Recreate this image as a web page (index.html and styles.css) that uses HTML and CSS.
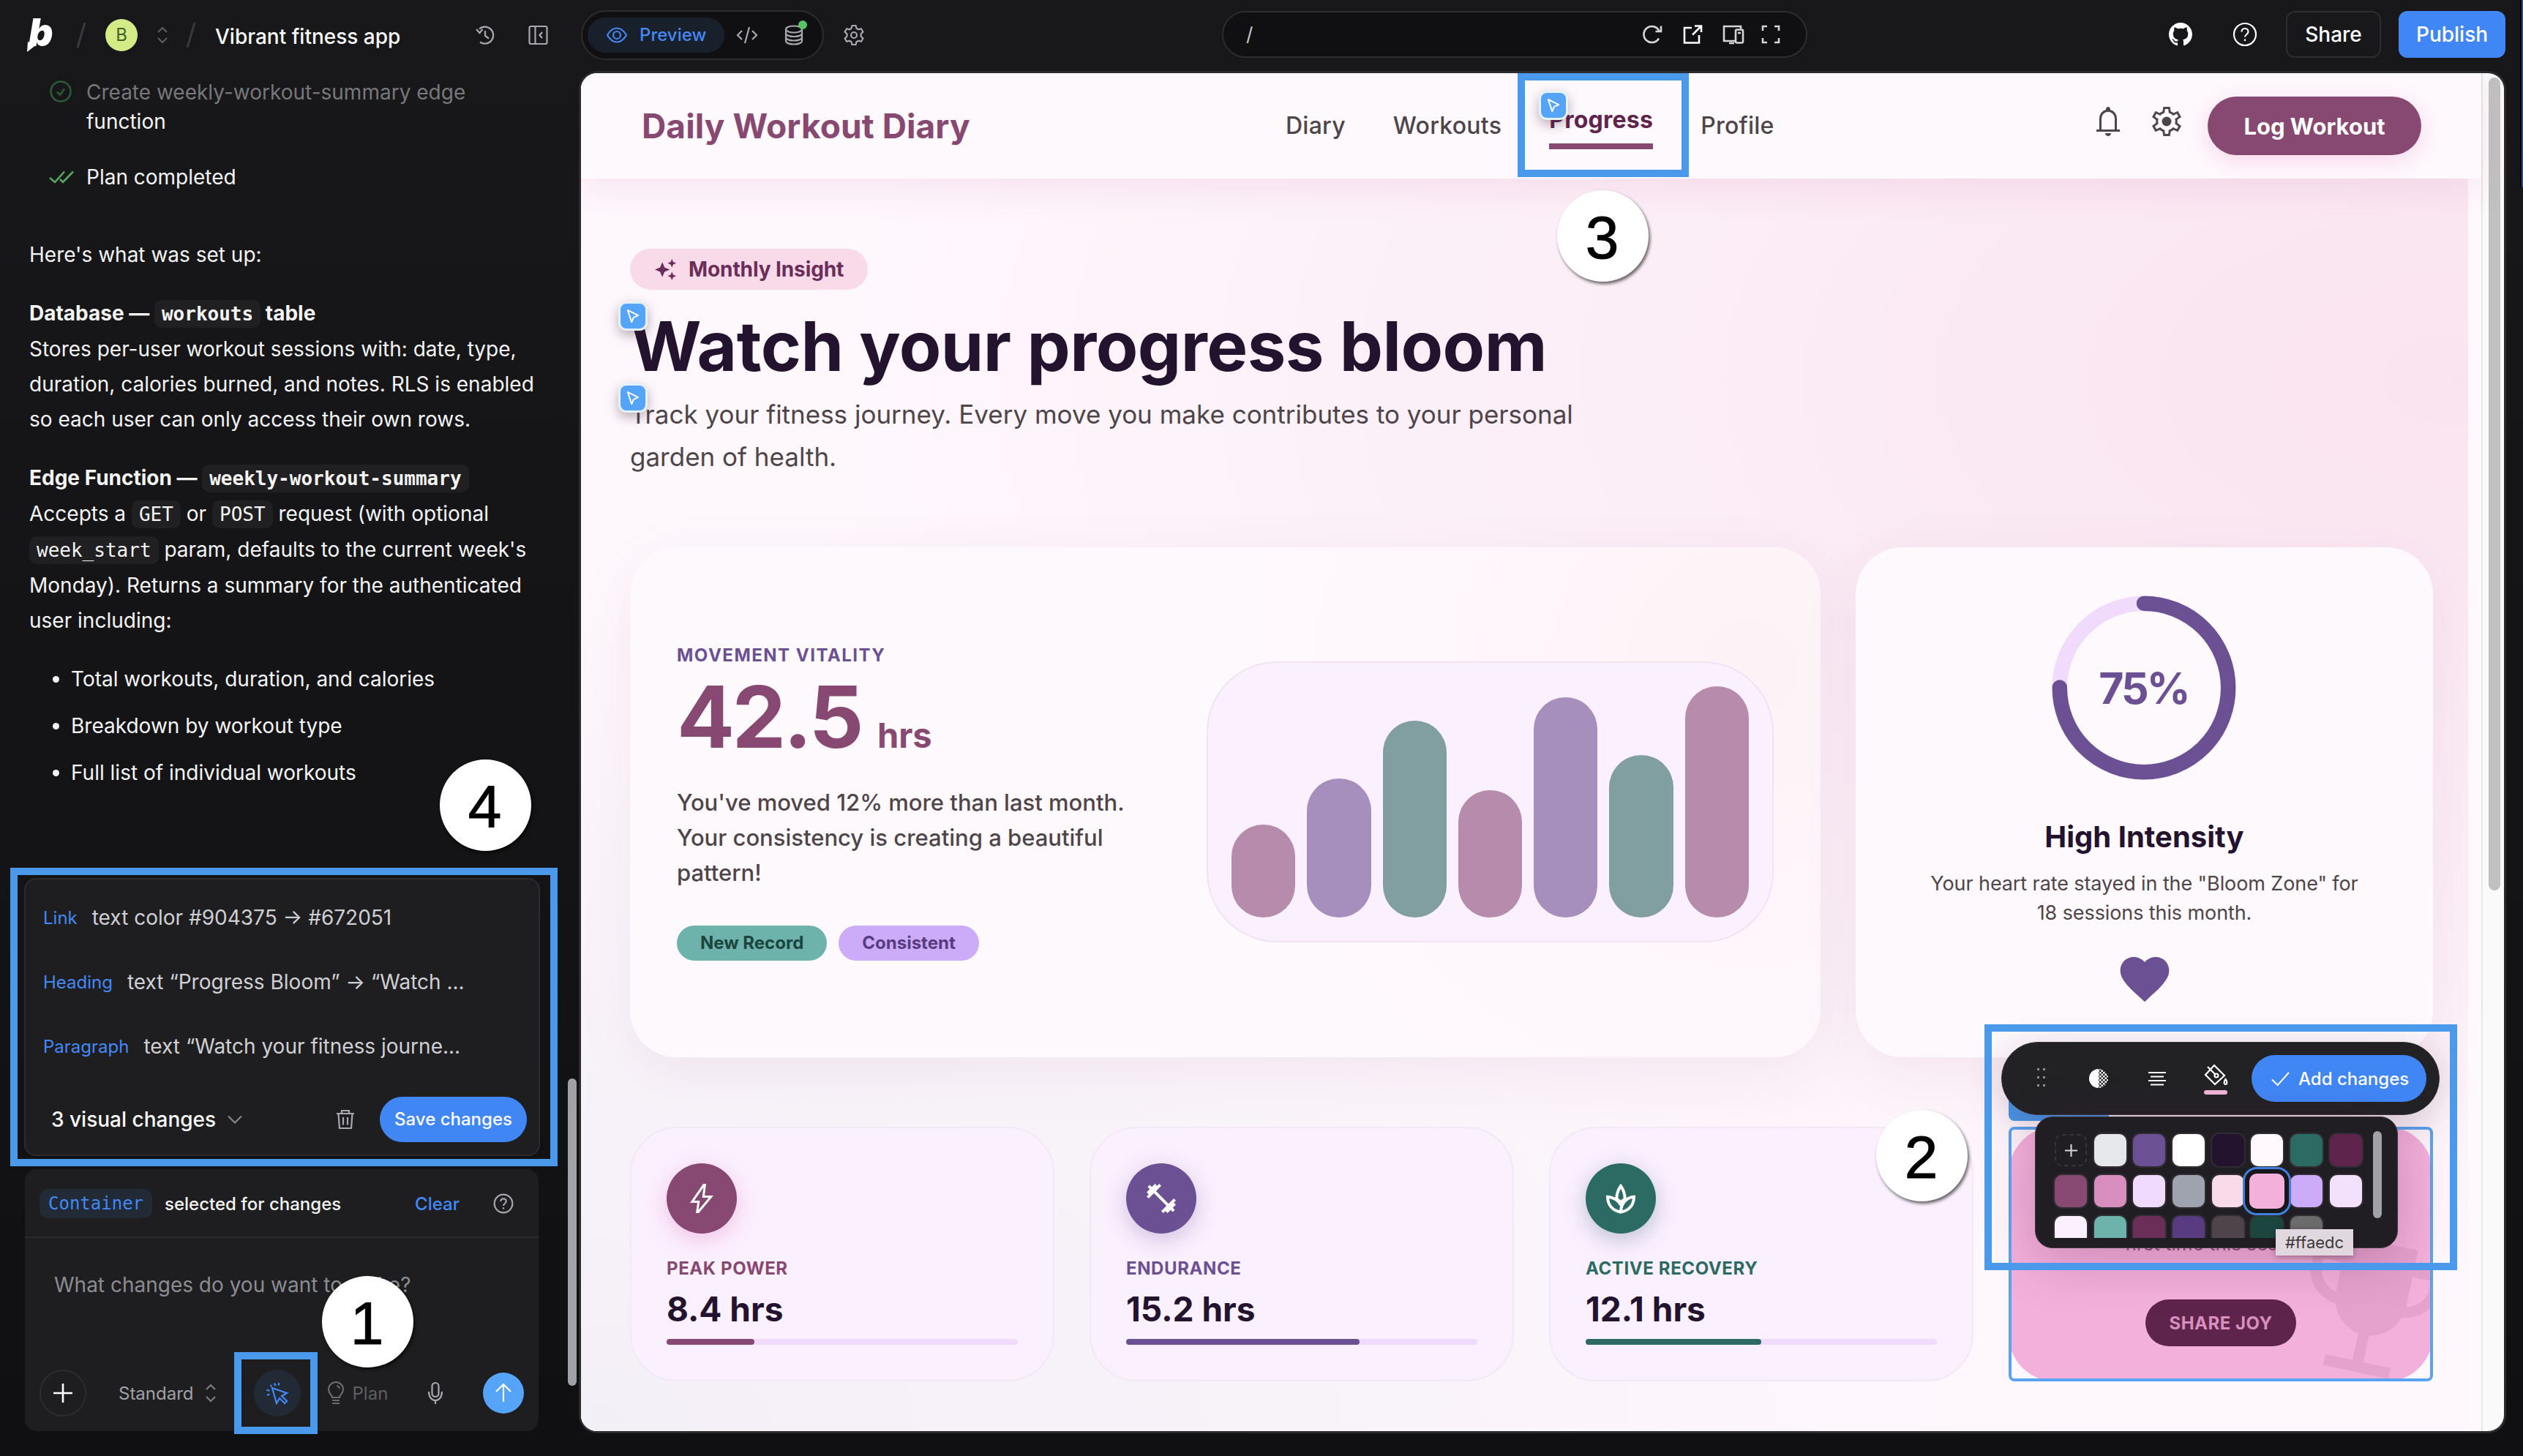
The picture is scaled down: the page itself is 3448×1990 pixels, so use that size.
FILE: index.html
```
<!DOCTYPE html>
<html lang="en">
<head>
  <meta charset="UTF-8">
  <meta name="viewport" content="width=device-width, initial-scale=1.0">
  <title>Vibrant fitness app</title>
  <link rel="stylesheet" href="styles.css">
</head>
<body>
  <header class="topbar">
    <div class="topbar-left">
      <svg class="logo" viewBox="0 0 44 52">
        <text x="4" y="41" class="logo-letter">b</text>
        <polygon points="3,35 15,39 2,49" fill="#fff"/>
      </svg>
      <svg class="slash" viewBox="0 0 14 38"><path d="M12 2L2 36"/></svg>
      <span class="avatar">B</span>
      <svg class="updown" viewBox="0 0 20 30"><path d="M4 11l6-6 6 6M4 19l6 6 6-6"/></svg>
      <svg class="slash slash-second" viewBox="0 0 14 38"><path d="M12 2L2 36"/></svg>
      <span class="project-name">Vibrant fitness app</span>
      <svg class="icon30 history" viewBox="0 0 30 30"><path d="M7 6.500A11.500 11.500 0 1 1 8 24.500M3 7l4.500 5 4-5M15 9v7l5 3.500"/></svg>
      <svg class="icon30 collapse" viewBox="0 0 30 30"><rect x="2.500" y="3" width="24" height="24" rx="2"/><path d="M10.500 3v24M20 11l-3.500 4 3.500 4"/></svg>
    </div>
    <div class="view-switch">
      <span class="preview-tab">
        <svg class="icon30" viewBox="0 0 30 30"><path d="M2 15Q7.500 5.500 15 5.500T28 15Q22.500 24.500 15 24.500T2 15Z"/><circle cx="15" cy="15" r="5"/></svg>
        Preview
      </span>
      <svg class="icon30" viewBox="0 0 30 30"><path d="M8 9l-6 6 6 6M22 9l6 6-6 6M18 4l-6 22"/></svg>
      <span class="database">
        <svg class="icon30" viewBox="0 0 30 30"><ellipse cx="15" cy="7" rx="11" ry="4.500"/><path d="M4 7v16c0 6 22 6 22 0V7M4 12.500c0 6 22 6 22 0M4 18c0 6 22 6 22 0"/></svg>
        <i class="status-dot"></i>
      </span>
    </div>
    <svg class="topbar-gear" viewBox="0 0 32 32"><path d="M13.500 3h5l1 3.800 2.600 1.500 3.800-1.100 2.500 4.300-2.800 2.800v3.400l2.800 2.800-2.500 4.300-3.800-1.100-2.600 1.500-1 3.800h-5l-1-3.800-2.600-1.500-3.800 1.100-2.500-4.300 2.800-2.800v-3.400L3.600 11.500l2.500-4.300 3.800 1.100 2.600-1.500z"/><circle cx="16" cy="16" r="4"/></svg>
    <div class="url-bar">
      <span class="url">/</span>
      <svg class="icon30" viewBox="0 0 30 30"><path d="M24 20.500A11 11 0 1 1 24.500 10.500M27 3.500v7.500h-7.500"/></svg>
      <svg class="icon30 bright" viewBox="0 0 30 30"><path d="M14 6H4v20.500h20V16M18 3.500h9V12M27 3.500L15 15.500"/></svg>
      <svg class="icon30 devices" viewBox="0 0 32 30"><path d="M26 7V4H3v20h15M10 27h7"/><rect x="19" y="8.500" width="10" height="18" rx="2"/><path d="M22 13h4"/></svg>
      <svg class="icon30 fullscreen" viewBox="0 0 30 30"><path d="M4 10V4h6M20 4h6v6M26 20v6h-6M10 26H4v-6"/></svg>
    </div>
    <svg class="github" viewBox="0 0 16 16"><path d="M8 0C3.580 0 0 3.580 0 8c0 3.540 2.290 6.530 5.470 7.590.4.070.55-.17.55-.38 0-.19-.01-.82-.01-1.490-2.010.37-2.530-.49-2.690-.94-.09-.23-.48-.94-.82-1.130-.28-.15-.68-.52-.01-.53.63-.01 1.080.58 1.230.82.72 1.210 1.870.87 2.330.66.07-.52.28-.87.51-1.070-1.780-.2-3.640-.89-3.640-3.950 0-.87.31-1.590.82-2.150-.08-.2-.36-1.020.08-2.120 0 0 .67-.21 2.200.82.64-.18 1.320-.27 2-.27s1.360.09 2 .27c1.530-1.040 2.200-.82 2.200-.82.44 1.100.16 1.920.08 2.120.51.56.82 1.270.82 2.150 0 3.070-1.870 3.750-3.650 3.950.29.25.54.73.54 1.480 0 1.070-.01 1.930-.01 2.200 0 .21.15.46.55.38A8.010 8.010 0 0 0 16 8c0-4.420-3.580-8-8-8z"/></svg>
    <svg class="help" viewBox="0 0 34 34"><circle cx="17" cy="17" r="15"/><path d="M12.500 13.500c0-6 9-6 9 0 0 3.500-4.500 3.500-4.500 7M17 23.500v2.500"/></svg>
    <button class="share">Share</button>
    <button class="publish">Publish</button>
  </header>

  <div class="workspace">
    <aside class="sidebar">
      <div class="messages">
        <div class="step">
          <svg class="step-icon faded" viewBox="0 0 34 34"><circle cx="16" cy="16" r="13.500"/><path d="M11 16.500l4 4 6-8"/></svg>
          <p class="step-text"><span class="dim">Create weekly-workout-summary edge</span> function</p>
        </div>
        <div class="step done">
          <svg class="step-icon" viewBox="0 0 34 34"><path d="M1 18l7 6L21 9.500M15 20l4 4L33 9.500"/></svg>
          <p class="step-text">Plan completed</p>
        </div>
        <p>Here's what was set up:</p>
        <p><strong>Database — <code>workouts</code> table</strong><br>
          Stores per-user workout sessions with: date, type, duration, calories burned, and notes. RLS is enabled so each user can only access their own rows.</p>
        <p><strong>Edge Function — <code>weekly-workout-summary</code></strong><br>
          Accepts a <code>GET</code> or <code>POST</code> request (with optional <code>week_start</code> param, defaults to the current week's Monday). Returns a summary for the authenticated user including:</p>
        <ul>
          <li>Total workouts, duration, and calories</li>
          <li>Breakdown by workout type</li>
          <li>Full list of individual workouts</li>
        </ul>
      </div>

      <section class="changes">
        <div class="change"><span class="kind">Link</span>text color #904375 → #672051</div>
        <div class="change"><span class="kind">Heading</span>text “Progress Bloom” → “Watch ...</div>
        <div class="change"><span class="kind">Paragraph</span>text “Watch your fitness journe...</div>
        <div class="changes-footer">
          <span>3 visual changes</span>
          <svg class="chevron" viewBox="0 0 22 22"><path d="M2 6.500l9 9 9-9"/></svg>
          <svg class="trash" viewBox="0 0 28 30"><path d="M2 7h24M9 7V3h10v4M4.500 7l1.500 20h16l1.500-20M11 12v10.500M17 12v10.500"/></svg>
          <button class="save">Save changes</button>
        </div>
      </section>

      <section class="chat">
        <div class="selected">
          <code class="element-tag">Container</code>
          <span class="selected-label">selected for changes</span>
          <a class="clear">Clear</a>
          <svg class="selected-help" viewBox="0 0 34 34"><circle cx="17" cy="17" r="15"/><path d="M12.500 13.500c0-6 9-6 9 0 0 3.500-4.500 3.500-4.500 7M17 23.500v2.500"/></svg>
        </div>
        <div class="prompt">What changes do you want to make?</div>
        <div class="chat-actions">
          <span class="attach"><svg viewBox="0 0 30 30"><path d="M15 2v26M2 15h26"/></svg></span>
          <span class="mode">Standard</span>
          <svg class="mode-arrows" viewBox="0 0 20 30"><path d="M4 10l6-6 6 6M4 20l6 6 6-6"/></svg>
          <span class="inspect"><svg viewBox="0 0 32 32"><path d="M9 9l20 7-7 4 7 7-3 3-7-7-4 7zM12 2.500l1.500 3.500M18.500 2l-1 3.500M6.500 5l2 2M1.500 11.500l4 1.500M2 19l3.500-1.500"/></svg></span>
          <svg class="bulb" viewBox="0 0 26 32"><path d="M8 22c0-4-5-5-5-11a10 10 0 0 1 20 0c0 6-5 7-5 11zM8 26h10M8 30h10M14 6c2 0 4 2 4 4"/></svg>
          <span class="plan">Plan</span>
          <svg class="mic" viewBox="0 0 24 32"><rect x="7.500" y="2" width="9" height="19" rx="4.500"/><path d="M3 14c0 16 18 16 18 0M12 26v5"/></svg>
          <span class="send"><svg viewBox="0 0 30 30"><path d="M15 27V3M5 13L15 3l10 10"/></svg></span>
        </div>
      </section>
      <i class="sidebar-scroll"></i>
    </aside>

    <div class="preview">
      <div class="page">
        <header class="site-header">
          <div class="brand">Daily Workout Diary</div>
          <nav class="site-nav">
            <a>Diary</a>
            <a>Workouts</a>
            <a class="active">Progress</a>
            <a>Profile</a>
          </nav>
          <svg class="symbol bell" viewBox="0 -960 960 960"><path d="M160-200v-60h80v-304q0-84 49.500-150.500T420-798v-22q0-25 17.500-42.500T480-880q25 0 42.500 17.500T540-820v22q81 17 130.500 83.500T720-564v304h80v60H160ZM480-80q-33 0-56.500-23.500T400-160h160q0 33-23.500 56.500T480-80ZM300-260h360v-304q0-75-52.500-127.500T480-744q-75 0-127.500 52.500T300-564v304Z"/></svg>
          <svg class="symbol cog" viewBox="0 -960 960 960"><path d="m388-80-20-126q-19-7-40-19t-37-25l-118 54-93-164 108-79q-2-9-2.500-20.500T185-480q0-9 .5-20.500T188-521L80-600l93-164 118 54q16-13 37-25t40-18l20-127h184l20 126q19 7 40.500 18.500T669-710l118-54 93 164-108 77q2 10 2.500 21.500t.5 21.500q0 10-.5 21t-2.500 21l108 78-93 164-118-54q-16 13-36.500 25.500T592-206L572-80H388Zm48-60h88l14-112q33-8 62.500-25t53.500-41l106 46 40-72-94-69q4-17 6.500-33.500T715-480q0-17-2-33.500t-7-33.500l94-69-40-72-106 46q-23-26-52-43.500T538-708l-14-112h-88l-14 112q-34 7-63.500 24T306-642l-106-46-40 72 94 69q-4 17-6.500 33.500T245-480q0 17 2.500 33.500T254-413l-94 69 40 72 106-46q24 24 53.500 41t62.500 25l14 112Z"/><circle cx="480" cy="-480" r="130"/></svg>
          <button class="log">Log Workout</button>
        </header>

        <main class="main">
          <span class="badge">
            <svg viewBox="0 0 24 24"><path d="M9 5l2.100 4.900L16 12l-4.900 2.100L9 19l-2.100-4.900L2 12l4.900-2.100zM18 2l1.200 2.800L22 6l-2.800 1.200L18 10l-1.200-2.800L14 6l2.800-1.200zM18 14l1.200 2.800L22 18l-2.800 1.200L18 22l-1.200-2.800L14 18l2.800-1.200z"/></svg>
            Monthly Insight
          </span>
          <h1>Watch your progress bloom</h1>
          <p class="lead">Track your fitness journey. Every move you make contributes to your personal garden of health.</p>

          <div class="highlights">
            <section class="card vitality">
              <div class="vitality-text">
                <h4>Movement Vitality</h4>
                <div class="hours">42.5<span>hrs</span></div>
                <p>You've moved 12% more than last month.<br>Your consistency is creating a beautiful pattern!</p>
                <div class="chips"><span class="chip teal">New Record</span><span class="chip violet">Consistent</span></div>
              </div>
              <div class="chart">
                <i class="rose" style="height: 40%"></i>
                <i class="purple" style="height: 60%"></i>
                <i class="green" style="height: 85%"></i>
                <i class="rose" style="height: 55%"></i>
                <i class="purple" style="height: 95%"></i>
                <i class="green" style="height: 70%"></i>
                <i class="rose" style="height: 100%"></i>
              </div>
            </section>
            <section class="card intensity">
              <div class="ring">
                <svg viewBox="0 0 100 100">
                  <circle cx="50" cy="50" r="45" stroke="#f1dbfd"/>
                  <circle cx="50" cy="50" r="45" stroke="#6c5094" stroke-linecap="round" stroke-dasharray="212.060 282.740" transform="rotate(-90 50 50)"/>
                </svg>
                <span>75%</span>
              </div>
              <h3>High Intensity</h3>
              <p>Your heart rate stayed in the "Bloom Zone" for<br>18 sessions this month.</p>
              <svg class="heart" viewBox="0 0 24 24"><path d="M12 21.350l-1.450-1.320C5.400 15.360 2 12.280 2 8.500 2 5.420 4.420 3 7.500 3c1.740 0 3.410.81 4.500 2.090C13.090 3.810 14.760 3 16.500 3 19.580 3 22 5.420 22 8.500c0 3.780-3.400 6.860-8.550 11.540L12 21.350z"/></svg>
            </section>
          </div>

          <div class="stats">
            <section class="stat power">
              <span class="stat-icon"><svg viewBox="0 -960 960 960"><path d="m393-165 279-335H492l36-286-253 366h154l-36 255Zm-73 85 40-280H160l360-520h80l-40 320h240L400-80h-80Z"/></svg></span>
              <h4>Peak Power</h4>
              <div class="value">8.4 hrs</div>
              <div class="progress"><i style="width: 25%"></i></div>
            </section>
            <section class="stat endurance">
              <span class="stat-icon"><svg viewBox="0 0 24 24"><path d="M20.570 14.860L22 13.430 20.570 12 17 15.570 8.430 7 12 3.430 10.570 2 9.140 3.430 7.710 2 5.570 4.140 4.140 2.710 2.710 4.140l1.430 1.430L2 7.710l1.430 1.430L2 10.570 3.430 12 7 8.430 15.570 17 12 20.570 13.430 22l1.430-1.430L16.290 22l2.140-2.140 1.430 1.430 1.430-1.430-1.430-1.430L22 16.290z"/></svg></span>
              <h4>Endurance</h4>
              <div class="value">15.2 hrs</div>
              <div class="progress"><i style="width: 66.500%"></i></div>
            </section>
            <section class="stat recovery">
              <span class="stat-icon"><svg class="lotus" viewBox="0 0 24 24"><path d="M12 21.200C6.500 20.500 3 16.500 3 10.900c3.800.3 7.200 2.300 9.300 5.800M12 21.200c5.500-.7 9-4.700 9-10.300-3.600.3-8.800 2.800-9 10.300zM9.100 12.200C9.300 8.400 10.300 5.800 12 3.500c1.700 2.300 2.700 4.900 2.900 8.700M9.100 12.200c1.200.8 2.200 1.700 2.900 2.800.7-1.100 1.700-2 2.900-2.800"/></svg></span>
              <h4>Active Recovery</h4>
              <div class="value">12.1 hrs</div>
              <div class="progress"><i style="width: 50%"></i></div>
            </section>
            <section class="stat trophy">
              <svg class="trophy-icon" viewBox="0 -960 960 960"><path d="M298-120v-60h152v-148q-54-11-96-46.500T296-463q-74-8-125-60t-51-125v-44q0-25 17.500-42.500T180-752h104v-88h392v88h104q25 0 42.500 17.500T840-692v44q0 73-51 125t-125 60q-16 53-58 88.500T510-328v148h152v60H298Zm-14-404v-168H180v44q0 45 29.500 78.500T284-524Zm392 0q45-12 74.500-45.500T780-648v-44H676v168Z" fill-rule="evenodd"/></svg>
              <p>first time this season.</p>
              <button class="joy">SHARE JOY</button>
            </section>
          </div>
        </main>
      </div>
      <div class="page-scroll"><i></i></div>
    </div>
  </div>

  <!-- selected element outline and its toolbar -->
  <i class="outline-tag"></i>
  <i class="outline"></i>
  <div class="toolbar">
    <svg class="grip" viewBox="0 0 14 30"><path d="M2 2h3v3h-3zM10 2h3v3h-3zM2 13h3v3h-3zM10 13h3v3h-3zM2 24h3v3h-3zM10 24h3v3h-3z"/></svg>
    <svg class="contrast" viewBox="0 0 28 28">
      <defs><pattern id="checks" width="5" height="5" patternUnits="userSpaceOnUse"><path d="M0 0h2.500v2.500H0zM2.500 2.500h2.500v2.500H2.500z" fill="#fff"/></pattern></defs>
      <path d="M14 1a13 13 0 0 0 0 26z" fill="#fff"/><path d="M14 1a13 13 0 0 1 0 26z" fill="url(#checks)"/>
    </svg>
    <svg class="align" viewBox="0 0 26 20"><path d="M1 2h24M4 7.500h18M1 13h24M4 18.500h18"/></svg>
    <span class="fill">
      <svg viewBox="0 0 34 32"><path d="M14 3l14 14-13 12L2 16zM5 5l11 11M29.500 22c3 4 2 7 0 7s-3-3 0-7z"/><circle cx="17" cy="17" r="2.500"/></svg>
      <i></i>
    </span>
    <button class="add"><svg viewBox="0 0 28 22"><path d="M2 12l8 8L26 2"/></svg>Add changes</button>
  </div>
  <div class="palette">
    <div class="swatches">
      <i class="swatch new"><svg viewBox="0 0 20 20"><path d="M10 1v18M1 10h18"/></svg></i>
      <i class="swatch" style="background: #e5e7eb"></i>
      <i class="swatch" style="background: #6c5094"></i>
      <i class="swatch" style="background: #ffffff"></i>
      <i class="swatch" style="background: #24132e"></i>
      <i class="swatch" style="background: #fff8fc"></i>
      <i class="swatch" style="background: #2c6b63"></i>
      <i class="swatch" style="background: #5f244c"></i>
      <i class="swatch" style="background: #874871"></i>
      <i class="swatch" style="background: #d88fbf"></i>
      <i class="swatch" style="background: #f1dbfd"></i>
      <i class="swatch" style="background: #9fa3af"></i>
      <i class="swatch" style="background: #f8dae9"></i>
      <i class="swatch picked" style="background: #f2b0da"></i>
      <i class="swatch" style="background: #ccabf9"></i>
      <i class="swatch" style="background: #f3e0fb"></i>
      <i class="swatch" style="background: #fbf0fe"></i>
      <i class="swatch" style="background: #6db3ab"></i>
      <i class="swatch" style="background: #6b2e59"></i>
      <i class="swatch" style="background: #583b80"></i>
      <i class="swatch" style="background: #4f444a"></i>
      <i class="swatch" style="background: #1c4540"></i>
      <i class="swatch" style="background: #6b6b6b"></i>
    </div>
    <i class="palette-scroll"></i>
  </div>
  <span class="tooltip">#ffaedc</span>

  <span class="edit-pin pin-nav"><svg viewBox="0 0 20 22"><path d="M2 2l16 8-7 3-3 7z"/></svg></span>
  <span class="edit-pin pin-heading"><svg viewBox="0 0 20 22"><path d="M2 2l16 8-7 3-3 7z"/></svg></span>
  <span class="edit-pin pin-lead"><svg viewBox="0 0 20 22"><path d="M2 2l16 8-7 3-3 7z"/></svg></span>

  <!-- numbered callouts -->
  <i class="frame frame-inspect"></i>
  <i class="frame frame-toolbar"></i>
  <i class="frame frame-nav"></i>
  <i class="frame frame-changes"></i>
  <span class="callout callout-1">1</span>
  <span class="callout callout-2">2</span>
  <span class="callout callout-3">3</span>
  <span class="callout callout-4">4</span>
  <i class="edge"></i>
</body>
</html>
```
FILE: styles.css
```
* {
  box-sizing: border-box;
}

body {
  position: relative;
  margin: 0;
  width: 3448px;
  height: 1990px;
  overflow: hidden;
  background: linear-gradient(#18181a, #101012);
  color: #f4f4f5;
  font-family: Inter, "Liberation Sans", sans-serif;
  font-size: 28px;
}

h1, h3, h4, p, ul {
  margin: 0;
}

i {
  display: block;
}

button {
  border: none;
  padding: 0;
  font-family: inherit;
  color: #fff;
}

svg {
  display: block;
  flex: none;
  fill: none;
  stroke: #a8a8ae;
  stroke-width: 2.2;
}

/* top bar */
.topbar {
  display: flex;
  align-items: center;
  height: 93px;
}

.topbar-left {
  display: flex;
  align-items: center;
  width: 794px;
  padding: 3px 43px 0 35px;
}

.logo {
  width: 44px;
  height: 52px;
  stroke: none;
  overflow: visible;
}

.logo-letter {
  font-size: 52px;
  font-weight: 900;
  font-style: italic;
  fill: #fff;
}

.slash {
  width: 14px;
  height: 38px;
  margin-left: 25px;
  stroke: #3a3a3d;
  stroke-width: 3;
}

.slash-second {
  margin-left: 22px;
}

.avatar {
  width: 44px;
  height: 44px;
  margin-left: 26px;
  border-radius: 50%;
  background: #d3ec87;
  color: #47602a;
  font-size: 24px;
  line-height: 44px;
  text-align: center;
}

.updown {
  width: 20px;
  height: 30px;
  margin-left: 24px;
  stroke: #5c5c60;
}

.project-name {
  margin: 3px auto 0 26px;
  font-weight: 500;
  color: #fafafa;
}

.icon30 {
  width: 30px;
  height: 30px;
}

.collapse {
  margin-left: 43px;
}

.view-switch {
  display: flex;
  align-items: center;
  gap: 34px;
  width: 332px;
  height: 68px;
  margin-top: 2px;
  padding-left: 7px;
  border: 2px solid #2d2d30;
  border-radius: 34px;
  background: #101012;
}

.preview-tab {
  display: flex;
  align-items: center;
  gap: 16px;
  width: 187px;
  height: 48px;
  margin-right: -18px;
  padding-left: 25px;
  border-radius: 24px;
  background: #18202b;
  color: #4488f5;
  font-size: 24px;
  font-weight: 500;
}

.preview-tab svg {
  stroke: #4488f5;
}

.database {
  position: relative;
}

.status-dot {
  position: absolute;
  top: -5px;
  right: -3px;
  width: 12px;
  height: 12px;
  border-radius: 50%;
  background: #57c464;
}

.topbar-gear {
  width: 32px;
  height: 32px;
  margin: 3px 486px 0 25px;
}

.url-bar {
  display: flex;
  align-items: center;
  gap: 25px;
  width: 800px;
  height: 64px;
  margin: 0 494px 0 1px;
  padding: 0 31px;
  border: 2px solid #2d2d30;
  border-radius: 32px;
  background: #101012;
}

.url-bar svg {
  stroke: #d4d4d8;
  stroke-width: 2.6;
}

.url-bar .bright {
  stroke: #fff;
}

.url-bar .devices {
  width: 32px;
}

.url-bar .fullscreen {
  margin: 0 2px 0 -5px;
}

.url {
  margin-right: auto;
  color: #c6c6ca;
  font-size: 26px;
}

.github {
  width: 32px;
  height: 32px;
  fill: #fff;
  stroke: none;
}

.help {
  width: 34px;
  height: 34px;
  margin: 0 39px 0 55px;
  stroke: #fff;
}

.share,
.publish {
  height: 64px;
  border-radius: 12px;
  font-size: 28px;
  font-weight: 500;
}

.share {
  width: 130px;
  margin-right: 24px;
  border: 2px solid #2d2d30;
  background: none;
}

.publish {
  width: 146px;
  background: #4087f5;
}

/* sidebar */
.workspace {
  display: flex;
  height: 1863px;
}

.sidebar {
  position: relative;
  display: flex;
  flex-direction: column;
  width: 794px;
  padding: 13px 58px 0 34px;
}

.messages {
  height: 1093px;
  padding: 0 0 0 6px;
  line-height: 48px;
}

.messages p {
  width: 704px;
  margin-bottom: 32px;
}

.step {
  display: flex;
  gap: 17px;
  margin-bottom: 36px;
  padding-left: 27px;
  line-height: 40px;
}

.step.done {
  margin-bottom: 62px;
}

.step .step-text {
  width: 560px;
  margin: 0;
}

.dim {
  color: #77777a;
}

.step-icon {
  width: 34px;
  height: 34px;
  margin-top: 3px;
  stroke: #56a85f;
  stroke-width: 2.6;
}

.step-icon.faded {
  stroke: #2c5a36;
}

code {
  padding: 4px 10px;
  border-radius: 10px;
  background: #202022;
  font-family: "DejaVu Sans Mono", monospace;
  font-size: 26px;
}

.messages ul {
  padding-left: 57px;
}

.messages li {
  margin-bottom: 16px;
}

.changes {
  flex: none;
  width: 705px;
  height: 380px;
  margin: 1px 0 18px -1px;
  padding-top: 8px;
  border: 2px solid #2c2c2f;
  border-radius: 16px;
  background: #1e1e20;
  color: #cfcfd4;
}

.change {
  display: flex;
  align-items: center;
  height: 88px;
  padding-left: 24px;
}

.kind {
  margin-right: 20px;
  color: #4389f6;
  font-size: 24px;
}

.changes-footer {
  display: flex;
  align-items: center;
  height: 102px;
  padding: 9px 16px 0 35px;
  color: #fafafa;
  font-weight: 500;
}

.chevron {
  width: 22px;
  height: 22px;
  margin-left: 15px;
  stroke: #87878c;
}

.trash {
  width: 28px;
  height: 30px;
  margin: 0 33px 0 auto;
}

.save {
  width: 201px;
  height: 62px;
  border-radius: 31px;
  background: #4087f5;
  font-size: 24px;
  font-weight: 500;
}

.chat {
  flex: none;
  width: 702px;
  height: 358px;
  border-radius: 16px;
  background: #1e1e20;
}

.selected {
  display: flex;
  align-items: center;
  height: 94px;
  padding: 2px 34px 0 20px;
  border-bottom: 2px solid #2c2c2f;
  font-size: 24px;
  font-weight: 500;
}

.element-tag {
  width: 154px;
  height: 40px;
  padding: 0 12px;
  border-radius: 12px;
  background: #222a35;
  color: #4389f6;
  font-size: 24px;
  font-weight: 400;
  line-height: 40px;
}

.selected-label {
  margin-left: 17px;
}

.clear {
  margin-left: auto;
  color: #4389f6;
}

.selected-help {
  width: 28px;
  height: 28px;
  margin-left: 46px;
  stroke-width: 2.6;
}

.prompt {
  height: 178px;
  padding: 47px 0 0 40px;
  color: #8c8c92;
  line-height: 34px;
}

.chat-actions {
  display: flex;
  align-items: center;
  height: 68px;
  padding-left: 20px;
  font-size: 24px;
}

.attach,
.inspect,
.send {
  display: flex;
  align-items: center;
  justify-content: center;
  width: 64px;
  height: 64px;
  border-radius: 50%;
}

.attach {
  border: 2px solid #2c2c2f;
}

.attach svg {
  width: 30px;
  height: 30px;
  stroke: #fff;
  stroke-width: 2.6;
}

.mode {
  margin-left: 44px;
  color: #a1a1a8;
}

.mode-arrows {
  width: 20px;
  height: 30px;
  margin: 0 49px 0 13px;
  stroke: #7c7c82;
}

.inspect {
  background: #222a35;
}

.inspect svg {
  width: 32px;
  height: 32px;
  stroke: #4389f6;
}

.bulb {
  width: 26px;
  height: 32px;
  margin: 0 10px 0 35px;
  stroke: #69696e;
}

.plan {
  color: #5e5e63;
}

.mic {
  width: 24px;
  height: 32px;
  margin: 0 53px 0 53px;
}

.send {
  width: 56px;
  height: 56px;
  background: #55a4f8;
}

.send svg {
  width: 30px;
  height: 30px;
  stroke: #fff;
}

.sidebar-scroll {
  position: absolute;
  right: 6px;
  bottom: 62px;
  width: 12px;
  height: 420px;
  border-radius: 6px;
  background: #a1a1a8;
}

/* previewed site */
.preview {
  display: flex;
  width: 2628px;
  height: 1856px;
  margin-top: 7px;
  border-radius: 22px;
  box-shadow: 0 0 0 3px #2b2b2e;
  overflow: hidden;
  background: #fafafa;
}

.page {
  width: 2597px;
  background: #fef9fd;
  color: #4f444a;
}

.page-scroll {
  width: 31px;
  padding: 6px 0 0 8px;
  border-left: 2px solid #e9e5e9;
}

.page-scroll i {
  width: 16px;
  height: 1111px;
  border-radius: 8px;
  background: #c1c1c1;
}

.site-header {
  position: relative;
  display: flex;
  align-items: center;
  height: 144px;
  padding: 0 82px 0 83px;
  background: #fef9fd;
  box-shadow: 0 16px 48px rgba(190, 70, 140, 0.1);
}

.brand {
  width: 880px;
  color: #874871;
  font-size: 46px;
  font-weight: 700;
  letter-spacing: 0.1px;
}

.site-nav {
  display: flex;
  align-items: center;
  gap: 65px;
  margin-right: auto;
  font-size: 32px;
  font-weight: 500;
  line-height: 48px;
  letter-spacing: 0.25px;
}

.site-nav .active {
  padding-bottom: 8px;
  border-bottom: 8px solid #874871;
  color: #5f244c;
  font-weight: 700;
}

.symbol {
  width: 48px;
  height: 48px;
  margin: -12px 32px 0 0;
  fill: #4f444a;
  stroke: none;
}

.log {
  width: 292px;
  height: 80px;
  border-radius: 40px;
  background: #874871;
  box-shadow: 0 8px 32px rgba(220, 60, 160, 0.18);
  font-size: 31px;
  font-weight: 700;
}

.main {
  width: 2579px;
  height: 1712px;
  padding: 96px 48px 0 67px;
  background:
    radial-gradient(ellipse 2300px 1300px at 100% 16%, #f9e3ef 0%, rgba(249, 227, 239, 0) 100%),
    radial-gradient(ellipse 2000px 1150px at 0 100%, #f3eff6 0%, rgba(243, 239, 246, 0) 100%),
    #fef8fd;
}

.badge {
  display: flex;
  align-items: center;
  gap: 14px;
  width: 325px;
  height: 56px;
  padding-left: 31px;
  border-radius: 28px;
  background: #f8dae9;
  color: #6b2e59;
  font-size: 28px;
  font-weight: 700;
  letter-spacing: -0.1px;
}

.badge svg {
  width: 35px;
  height: 35px;
  fill: #6b2e59;
  stroke: none;
}

h1 {
  margin-top: 24px;
  color: #24132e;
  font-size: 94px;
  font-weight: 700;
  line-height: 106px;
  letter-spacing: -0.5px;
}

.lead {
  width: 1344px;
  height: 116px;
  margin: 12px 0 94px;
  font-size: 35px;
  line-height: 57.6px;
}

.highlights {
  display: grid;
  grid-template-columns: 1627px 789px;
  gap: 48px;
  height: 697px;
  margin-bottom: 95px;
}

.card {
  border-radius: 64px;
  background: #fef9fd;
  box-shadow: 0 20px 80px rgba(136, 70, 113, 0.08);
}

.vitality {
  display: flex;
  align-items: center;
  justify-content: space-between;
  padding: 0 64px;
  background: radial-gradient(circle 700px at 94% 24%, #fdf3f7, #fef9fd);
}

.vitality-text {
  width: 640px;
}

.vitality h4 {
  margin-bottom: 8px;
  color: #6c5094;
  font-size: 24px;
  line-height: 32px;
  letter-spacing: 1.5px;
  text-transform: uppercase;
}

.hours {
  height: 120px;
  color: #874871;
  font-size: 117px;
  font-weight: 700;
  line-height: 120px;
  letter-spacing: -3.5px;
}

.hours span {
  margin-left: 22px;
  font-size: 47px;
  line-height: 1;
  letter-spacing: 0;
}

.vitality p {
  margin: 33px 0 48px;
  font-size: 31px;
  font-weight: 500;
  line-height: 48px;
}

.chips {
  display: flex;
  gap: 16px;
}

.chip {
  padding: 0 32px;
  border-radius: 24px;
  font-size: 24px;
  font-weight: 700;
  line-height: 48px;
}

.teal {
  background: #6db3ab;
  color: #1c4540;
}

.violet {
  background: #ccabf9;
  color: #583b80;
}

.chart {
  display: flex;
  align-items: flex-end;
  gap: 16px;
  width: 775px;
  height: 384px;
  margin-bottom: 2px;
  padding: 32px;
  border: 2px solid #f1e3f3;
  border-radius: 96px;
  background: #fbf0fe;
}

.chart i {
  flex: 1;
  border-radius: 44px;
}

.rose {
  background: #b68bab;
}

.purple {
  background: #a68fbd;
}

.green {
  background: #819fa1;
}

.intensity {
  display: flex;
  flex-direction: column;
  align-items: center;
  padding-top: 64px;
}

.ring {
  display: grid;
  place-items: center;
  width: 256px;
  height: 256px;
  margin-left: -2px;
}

.ring svg,
.ring span {
  grid-area: 1 / 1;
}

.ring svg {
  width: 256px;
  stroke-width: 8;
}

.ring span {
  color: #6c5094;
  font-size: 59px;
  font-weight: 700;
  letter-spacing: -3px;
}

.intensity h3 {
  margin-top: 48px;
  color: #24132e;
  font-size: 40px;
  line-height: 56px;
}

.intensity p {
  margin: 16px 0 30px;
  font-size: 27px;
  line-height: 40px;
  text-align: center;
  letter-spacing: -0.1px;
}

.heart {
  width: 80px;
  height: 80px;
  fill: #6c5094;
  stroke: none;
}

.stats {
  display: grid;
  grid-template-columns: repeat(4, 1fr);
  gap: 48px;
}

.stat {
  height: 348px;
  padding: 48px;
  border: 2px solid #f3e8f5;
  border-radius: 64px;
  background: #fbf0fe;
}

.stat-icon {
  display: flex;
  align-items: center;
  justify-content: center;
  width: 96px;
  height: 96px;
  border-radius: 50%;
}

.stat-icon svg {
  width: 48px;
  height: 48px;
  fill: #fff;
  stroke: none;
}

.stat-icon .lotus {
  fill: none;
  stroke: #fff;
  stroke-width: 2;
}

.stat h4 {
  margin-top: 32px;
  font-size: 24px;
  line-height: 32px;
  letter-spacing: 0.6px;
  text-transform: uppercase;
}

.value {
  margin: 11px 0 13px;
  color: #24132e;
  font-size: 46px;
  font-weight: 700;
  line-height: 56px;
}

.progress {
  height: 8px;
  border-radius: 4px;
  background: #f1dbfd;
}

.progress i {
  height: 8px;
  border-radius: 4px;
}

.power h4 {
  color: #874871;
}

.power .stat-icon {
  background: #874871;
  box-shadow: 0 8px 30px rgba(220, 60, 160, 0.25);
}

.power .progress i {
  background: #874871;
}

.endurance h4 {
  color: #6c5094;
}

.endurance .stat-icon {
  background: #6c5094;
  box-shadow: 0 8px 30px rgba(108, 80, 148, 0.3);
}

.endurance .progress i {
  background: #6c5094;
}

.recovery h4 {
  color: #2c6b63;
}

.recovery .stat-icon {
  background: #2c6b63;
  box-shadow: 0 8px 30px rgba(44, 80, 120, 0.3);
}

.recovery .progress i {
  background: #2c6b63;
}

.trophy {
  position: relative;
  display: flex;
  flex-direction: column;
  align-items: center;
  justify-content: flex-end;
  border: none;
  background: #f2b0da;
  overflow: hidden;
}

.trophy-icon {
  position: absolute;
  right: -33px;
  bottom: -19px;
  width: 240px;
  height: 240px;
  fill: rgba(136, 72, 113, 0.13);
  stroke: none;
  transform: rotate(12deg);
}

.trophy p {
  margin-bottom: 60px;
  color: #8f4f7a;
  font-size: 26px;
  line-height: 32px;
}

.joy {
  flex: none;
  width: 206px;
  height: 64px;
  border-radius: 32px;
  background: #5f244c;
  color: #d88fbf;
  font-size: 24px;
  font-weight: 700;
  letter-spacing: 0.5px;
}

/* element selection */
.outline-tag {
  position: absolute;
  left: 2745px;
  top: 1490px;
  width: 137px;
  height: 42px;
  border-radius: 0 0 0 8px;
  background: #4a99ea;
}

.outline {
  position: absolute;
  left: 2745px;
  top: 1540px;
  width: 580px;
  height: 348px;
  border: 4px solid #5aa3f0;
  border-radius: 8px;
}

.toolbar {
  position: absolute;
  left: 2735px;
  top: 1424px;
  display: flex;
  align-items: center;
  width: 599px;
  height: 100px;
  padding-left: 46px;
  border: 1px solid #343438;
  border-radius: 50px;
  background: #222225;
  box-shadow: 0 10px 50px rgba(60, 20, 50, 0.2);
}

.grip {
  width: 14px;
  height: 30px;
  margin-top: -2px;
  fill: #8d8d92;
  stroke: none;
}

.contrast {
  width: 28px;
  height: 28px;
  margin-left: 58px;
  stroke: none;
}

.align {
  width: 26px;
  height: 20px;
  margin-left: 53px;
  stroke: #fff;
}

.fill {
  margin-left: 51px;
}

.fill svg {
  width: 34px;
  height: 32px;
  stroke: #fff;
}

.fill i {
  width: 32px;
  height: 6px;
  margin-top: 5px;
  border-radius: 3px;
  background: #f0b6da;
}

.add {
  display: flex;
  align-items: center;
  gap: 11px;
  width: 239px;
  height: 64px;
  margin-left: 31px;
  padding-left: 26px;
  border-radius: 32px;
  background: #4087f5;
  font-size: 24px;
  font-weight: 500;
}

.add svg {
  width: 27px;
  height: 21px;
  stroke: #fff;
}

.palette {
  position: absolute;
  left: 2781px;
  top: 1526px;
  display: flex;
  width: 496px;
  height: 180px;
  padding: 19px 20px 13px 18px;
  border: 1px solid #39373b;
  border-radius: 24px;
  background: #201e22;
  box-shadow: 0 16px 70px rgba(90, 20, 70, 0.25);
}

.swatches {
  display: grid;
  grid-template-columns: repeat(8, 44px);
  grid-auto-rows: 44px;
  gap: 12px 9.700px;
  width: 440px;
  padding: 4px 8px 0;
  overflow: hidden;
}

.swatch {
  border-radius: 10px;
  box-shadow: 0 0 0 2px #2f2d32;
}

.new {
  display: grid;
  place-items: center;
  border: 2px dashed #37353a;
  box-shadow: none;
}

.new svg {
  width: 19px;
  height: 19px;
  stroke: #d4d4d8;
}

.picked {
  margin: -2px;
  outline: 3px solid #4080dc;
  outline-offset: 6px;
  box-shadow: 0 0 0 6px #17161a;
  z-index: 1;
}

.palette-scroll {
  width: 12px;
  height: 119px;
  margin-left: 3px;
  border-radius: 6px;
  background: #a1a1a8;
}

.tooltip {
  position: absolute;
  left: 3110px;
  top: 1680px;
  width: 106px;
  height: 36px;
  background: #e0d8de;
  box-shadow: 0 2px 8px rgba(0, 0, 0, 0.3);
  color: #3c383b;
  font-size: 22px;
  line-height: 36px;
  text-align: center;
}

.edit-pin {
  position: absolute;
  display: grid;
  place-items: center;
  width: 40px;
  height: 40px;
  border: 3px solid #e4f2fb;
  border-radius: 11px;
  background: #55a4f8;
  box-shadow: 0 6px 16px rgba(60, 30, 50, 0.35);
}

.edit-pin svg {
  width: 18px;
  height: 20px;
  stroke: #fff;
  stroke-linejoin: round;
}

.pin-nav {
  left: 2103px;
  top: 124px;
}

.pin-heading {
  left: 845px;
  top: 412px;
}

.pin-lead {
  left: 845px;
  top: 524px;
}

/* callouts */
.frame {
  position: absolute;
  border: 10px solid #4a99ea;
}

.frame-inspect {
  left: 320px;
  top: 1848px;
  width: 114px;
  height: 112px;
}

.frame-toolbar {
  left: 2712px;
  top: 1400px;
  width: 646px;
  height: 336px;
}

.frame-nav {
  left: 2074px;
  top: 100px;
  width: 234px;
  height: 142px;
}

.frame-changes {
  left: 14px;
  top: 1186px;
  width: 748px;
  height: 408px;
}

.callout {
  position: absolute;
  width: 125px;
  height: 125px;
  border-radius: 50%;
  background: #fff;
  box-shadow: 2px 3px 4px rgba(0, 0, 0, 0.6);
  color: #000;
  -webkit-text-stroke: 1px #000;
  font-family: "Liberation Sans", Arial, sans-serif;
  font-size: 82px;
  line-height: 130px;
  text-align: center;
  text-indent: -2px;
}

.callout-1 {
  left: 440px;
  top: 1744px;
}

.callout-2 {
  left: 2564px;
  top: 1517px;
}

.callout-3 {
  left: 2128px;
  top: 260px;
}

.callout-4 {
  left: 601px;
  top: 1038px;
}

/* sliver of the window behind */
.edge {
  position: absolute;
  right: 0;
  top: 0;
  width: 4px;
  height: 257px;
  border-left: 2px solid #000;
  border-radius: 0 0 0 8px;
  background: #1f4f8f;
}
```
